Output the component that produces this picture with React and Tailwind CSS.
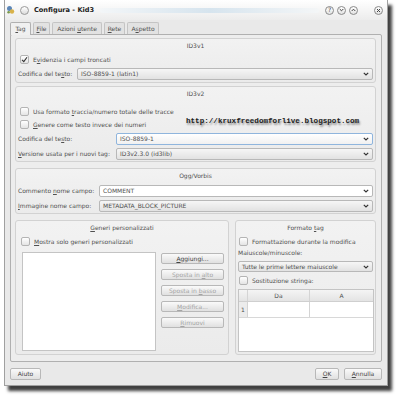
import React from 'react';

const U = ({ children }) => <span className="underline underline-offset-[1px]">{children}</span>;

const Chevron = () => (
  <svg width="6" height="4" viewBox="0 0 6 4" className="shrink-0">
    <path d="M0.8 0.8 L3 3 L5.2 0.8" fill="none" stroke="#333" strokeWidth="1.2" />
  </svg>
);

const Check = ({ checked }) => (
  <div className="w-[9px] h-[9px] shrink-0 rounded-[2px] border border-[#b4b4b4] bg-gradient-to-b from-white to-[#e4e4e4] flex items-center justify-center">
    {checked && (
      <svg width="7" height="7" viewBox="0 0 7 7">
        <path d="M1 3.8 L2.8 5.6 L6 1.2" fill="none" stroke="#333" strokeWidth="1.1" />
      </svg>
    )}
  </div>
);

const Combo = ({ children, white, focused, className = '' }) => (
  <div
    className={`rounded-[2px] border flex items-center justify-between pl-[3px] pr-[3px] ${
      focused ? 'border-[#8fb5dd] bg-gradient-to-b from-white to-[#f0f0f0]' : 'border-[#b8b8b8]'
    } ${white ? 'bg-white' : focused ? '' : 'bg-gradient-to-b from-[#f6f6f6] to-[#e2e2e2]'} ${className}`}
  >
    <span className="leading-[8px]">{children}</span>
    <Chevron />
  </div>
);

const Btn = ({ children, disabled, className = '' }) => (
  <div
    className={`rounded-[2px] border border-[#b8b8b8] bg-gradient-to-b from-[#fafafa] to-[#e0e0e0] flex items-center justify-center ${
      disabled ? 'text-[#a4a4a4]' : 'text-[#444]'
    } ${className}`}
  >
    <span>{children}</span>
  </div>
);

const Group = ({ title, className = '', children }) => (
  <div className={`rounded-[3px] border border-[#d2d2d2] bg-gradient-to-b from-[#f2f2f2] to-[#ebebeb] flex flex-col ${className}`}>
    <div className="h-[13px] flex items-center justify-center pt-[1px]">
      <span>{title}</span>
    </div>
    {children}
  </div>
);

const Row = ({ children, className = '' }) => (
  <div className={`flex items-center ${className}`}>{children}</div>
);

const Tab = ({ children, active, className = '' }) => (
  <div
    className={`justify-center flex items-center border border-b-0 rounded-t-[2px] ${
      active
        ? 'h-[13px] border-[#b0b0b0] bg-[#f0f0f0] -mb-px relative z-10'
        : 'h-[12px] border-[#c4c4c4] bg-[#e2e2e2]'
    } ${className}`}
  >
    <span>{children}</span>
  </div>
);

const TitleBtn = ({ children, className = '' }) => (
  <div className={`w-[9px] h-[9px] rounded-full border border-[#8a8a8a] bg-gradient-to-b from-white to-[#e2e2e2] flex items-center justify-center ${className}`}>
    {children}
  </div>
);

export default function App() {
  return (
    <div
      className="w-[400px] h-[397px] bg-white overflow-hidden text-[6px] leading-none text-[#505050] whitespace-nowrap"
      style={{ fontFamily: '"DejaVu Sans", sans-serif' }}
    >
      <div className="ml-[4px] w-[384px] h-[386px] bg-[#e9e9e9] border border-[#a0a0a0] border-t-0 shadow-[4px_5px_3px_rgba(0,0,0,0.75)] flex flex-col">
        {/* title bar */}
        <div className="h-[20px] flex items-center bg-gradient-to-b from-white to-[#ececec] pl-[1px] pr-[4px]">
          <svg width="9" height="10" viewBox="0 0 9 10" className="shrink-0">
            <circle cx="3.5" cy="3.5" r="2.5" fill="#5b86b8" />
            <circle cx="6" cy="6.5" r="2.2" fill="#d8b24a" />
            <circle cx="2.6" cy="7.2" r="1.3" fill="#7a9a4a" />
          </svg>
          <div className="ml-[5px] w-[9px] h-[9px] rounded-full border border-[#9a9a9a] bg-gradient-to-b from-white to-[#dcdcdc]" />
          <span className="ml-[5px] font-bold text-[6.6px] text-[#222]">Configura - Kid3</span>
          <div className="flex-1 mx-[6px] h-[5px] mt-[1px] bg-gradient-to-r from-[#f3f6f8] via-[#d6e4ee] to-[#f4f6f7] rounded-full" />
          <div className="flex items-center gap-[3px]">
            <TitleBtn><span className="text-[6px] text-[#444]">?</span></TitleBtn>
            <TitleBtn>
              <svg width="5" height="4" viewBox="0 0 5 4"><path d="M0.7 1 L2.5 2.8 L4.3 1" fill="none" stroke="#444" strokeWidth="1" /></svg>
            </TitleBtn>
            <TitleBtn>
              <svg width="5" height="4" viewBox="0 0 5 4"><path d="M0.7 3 L2.5 1.2 L4.3 3" fill="none" stroke="#444" strokeWidth="1" /></svg>
            </TitleBtn>
            <TitleBtn className="ml-[13px]">
              <svg width="5" height="5" viewBox="0 0 5 5"><path d="M1 1 L4 4 M4 1 L1 4" stroke="#444" strokeWidth="1" /></svg>
            </TitleBtn>
          </div>
        </div>

        {/* tabs */}
        <div className="h-[14px] flex items-end pl-[5px] gap-[2px]">
          <Tab active className="w-[21px]"><U>T</U>ag</Tab>
          <Tab className="w-[17px]"><U>F</U>ile</Tab>
          <Tab className="w-[50px]">Azioni <U>u</U>tente</Tab>
          <Tab className="w-[21px]"><U>R</U>ete</Tab>
          <Tab className="w-[32px]">A<U>s</U>petto</Tab>
        </div>

        {/* panel */}
        <div className="mx-[5px] h-[328px] border border-[#b0b0b0] rounded-[2px] bg-[#ededed] pl-[4px] pr-[5px] pt-[3px] flex flex-col relative">
          <Group title="ID3v1" className="h-[45px]">
            <Row className="pl-[4px] mt-[3px] gap-[4px]">
              <Check checked />
              <span>E<U>v</U>idenzia i campi troncati</span>
            </Row>
            <Row className="pl-[2px] pr-[2px] mt-[4px]">
              <span className="w-[59px]">Codifica del te<U>s</U>to:</span>
              <Combo className="flex-1 h-[12px]">ISO-8859-1 (latin1)</Combo>
            </Row>
          </Group>

          <Group title="ID3v2" className="h-[76px] mt-[3px]">
            <Row className="pl-[4px] mt-[7px] gap-[4px]">
              <Check />
              <span>Usa formato <U>t</U>raccia/numero totale delle tracce</span>
            </Row>
            <Row className="pl-[4px] mt-[4px] gap-[4px]">
              <Check />
              <span><U>G</U>enere come testo invece dei numeri</span>
            </Row>
            <Row className="pl-[2px] pr-[2px] mt-[4px]">
              <span className="w-[98px]">Codifica del te<U>s</U>to:</span>
              <Combo focused className="flex-1 h-[12px]">ISO-8859-1</Combo>
            </Row>
            <Row className="pl-[2px] pr-[2px] mt-[3px]">
              <span className="w-[98px]"><U>V</U>ersione usata per i nuovi tag:</span>
              <Combo className="flex-1 h-[12px]">ID3v2.3.0 (id3lib)</Combo>
            </Row>
          </Group>

          <Group title="Ogg/Vorbis" className="h-[46px] mt-[6px]">
            <Row className="pl-[2px] pr-[2px] mt-[3px]">
              <span className="w-[81px]">Commento <U>n</U>ome campo:</span>
              <Combo white className="flex-1 h-[12px]">COMMENT</Combo>
            </Row>
            <Row className="pl-[2px] pr-[2px] mt-[3px]">
              <span className="w-[81px]"><U>I</U>mmagine nome campo:</span>
              <Combo className="flex-1 h-[12px]">METADATA_BLOCK_PICTURE</Combo>
            </Row>
          </Group>

          <div className="flex gap-[6px] mt-[6px] h-[135px]">
            <Group title={<><U>G</U>eneri personalizzati</>} className="w-[214px] h-full">
              <Row className="pl-[5px] mt-[3px] gap-[4px]">
                <Check />
                <span><U>M</U>ostra solo generi personalizzati</span>
              </Row>
              <div className="flex pl-[6px] mt-[6px] gap-[5px]">
                <div className="w-[134px] h-[99px] bg-white border border-[#c4c4c4]" />
                <div className="w-[63px] flex flex-col gap-[5px] pt-[1px]">
                  <Btn className="h-[11px]"><U>A</U>ggiungi...</Btn>
                  <Btn disabled className="h-[11px]">Sposta in <U>a</U>lto</Btn>
                  <Btn disabled className="h-[11px]">Sposta in <U>b</U>asso</Btn>
                  <Btn disabled className="h-[11px]"><U>M</U>odifica...</Btn>
                  <Btn disabled className="h-[11px]"><U>R</U>imuovi</Btn>
                </div>
              </div>
            </Group>

            <Group title={<>Formato <U>t</U>ag</>} className="flex-1 h-full">
              <Row className="pl-[3px] mt-[3px] gap-[4px]">
                <Check />
                <span>Formattazione durante la modifica</span>
              </Row>
              <div className="pl-[2px] mt-[3px] h-[8px] flex items-center">
                <span>Maiuscole/minuscole:</span>
              </div>
              <div className="pl-[2px] pr-[2px] mt-[4px]">
                <Combo className="h-[11px]">Tutte le prime lettere maiuscole</Combo>
              </div>
              <Row className="pl-[3px] mt-[4px] gap-[4px]">
                <Check />
                <span>Sostituzione stringa:</span>
              </Row>
              <div className="ml-[2px] mr-[1px] mt-[4px] h-[63px] border border-[#c4c4c4] bg-white flex flex-col">
                <div className="h-[12px] flex bg-gradient-to-b from-[#f4f4f4] to-[#e4e4e4] border-b border-[#cfcfcf]">
                  <div className="w-[9px] border-r border-[#d4d4d4]" />
                  <div className="w-[62px] flex items-center justify-center border-r border-[#d4d4d4]"><span>Da</span></div>
                  <div className="flex-1 flex items-center justify-center"><span>A</span></div>
                </div>
                <div className="h-[16px] flex border-b border-[#d8d8d8]">
                  <div className="w-[9px] flex items-center justify-center bg-[#ececec] border-r border-[#d4d4d4]"><span>1</span></div>
                  <div className="w-[62px] border-r border-[#d4d4d4]" />
                  <div className="flex-1" />
                </div>
              </div>
            </Group>
          </div>

          <div
            className="absolute left-[175px] top-[83px] text-[7.6px] font-bold text-[#1c1c1c]"
            style={{ fontFamily: '"Liberation Mono", monospace', textShadow: '1px 2px 2px rgba(0,0,0,0.45)' }}
          >
            http://kruxfreedomforlive.blogspot.com
          </div>
        </div>

        {/* bottom buttons */}
        <div className="flex items-center justify-between pl-[5px] pr-[5px] mt-[6px]">
          <Btn className="w-[31px] h-[12px]">Aiuto</Btn>
          <div className="flex gap-[5px]">
            <Btn className="w-[24px] h-[12px]"><U>O</U>K</Btn>
            <Btn className="w-[38px] h-[12px]"><U>A</U>nnulla</Btn>
          </div>
        </div>
      </div>
    </div>
  );
}
